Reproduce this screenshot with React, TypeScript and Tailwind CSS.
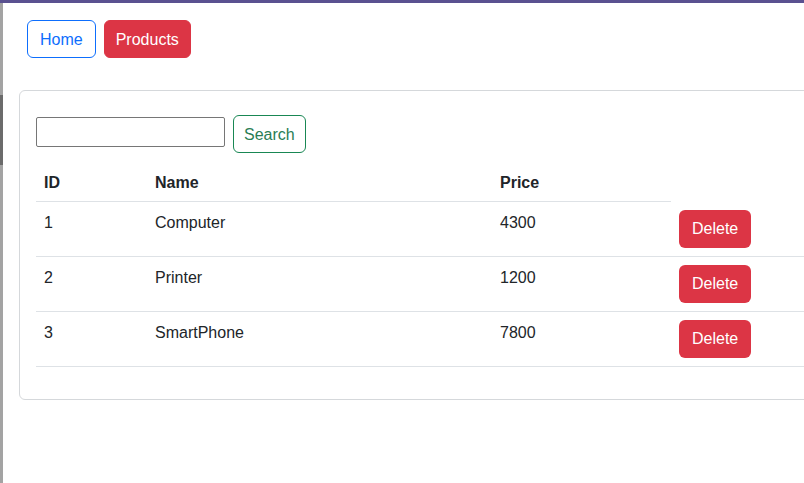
const products = [
  { id: 1, name: 'Computer', price: 4300 },
  { id: 2, name: 'Printer', price: 1200 },
  { id: 3, name: 'SmartPhone', price: 7800 },
]

export default function App() {
  return (
    <div className="flex h-[483px] w-[804px] flex-col overflow-hidden bg-white font-['Segoe_UI','Liberation_Sans',sans-serif] text-base text-[#212529]">
      <div className="h-[3px] shrink-0 bg-[#5a5190]" />
      <div className="flex flex-1">
        <div className="flex w-[3px] shrink-0 flex-col">
          <div className="h-[92px] bg-[#a3a3a3]" />
          <div className="h-[70px] bg-[#6b6b6b]" />
          <div className="flex-1 bg-[#a3a3a3]" />
        </div>
        <main className="flex-1 pl-4 pt-[17px]">
          <nav className="flex gap-2 pl-2">
            <button className="h-[38px] rounded-md border border-[#0d6efd] px-3 pt-[2px] text-[#0d6efd]">Home</button>
            <button className="h-[38px] rounded-md border border-[#dc3545] bg-[#dc3545] px-[11px] pt-[2px] text-white">
              Products
            </button>
          </nav>

          <section className="mt-8 w-[840px] rounded-md border border-[#d5d8db] px-4 pb-4 pt-6">
            <div className="flex items-start gap-2">
              <input className="mt-[2px] h-[30px] w-[189px] rounded-[2px] border border-[#767676] px-1 outline-none" />
              <button className="h-[38px] rounded-md border border-[#198754] px-[10px] pt-[1px] text-[#2a7d55]">Search</button>
            </div>

            <table className="mb-4 mt-[10px] w-full border-collapse text-left">
              <thead>
                <tr>
                  <th className="w-[111px] border-b border-[#dee2e6] px-2 pb-[6px] pt-[8px] font-bold">ID</th>
                  <th className="w-[345px] border-b border-[#dee2e6] px-2 pb-[6px] pt-[8px] font-bold">Name</th>
                  <th className="w-[179px] border-b border-[#dee2e6] px-2 pb-[6px] pt-[8px] font-bold">Price</th>
                </tr>
              </thead>
              <tbody>
                {products.map((p) => (
                  <tr key={p.id} className="border-b border-[#dee2e6]">
                    <td className="px-2 pb-[7px] pt-[9px] align-top">{p.id}</td>
                    <td className="px-2 pb-[7px] pt-[9px] align-top">{p.name}</td>
                    <td className="px-2 pb-[7px] pt-[9px] align-top">{p.price}</td>
                    <td className="px-2 py-2 align-top">
                      <button className="h-[38px] rounded-md bg-[#dc3545] px-[13px] pt-[1px] text-white">Delete</button>
                    </td>
                  </tr>
                ))}
              </tbody>
            </table>
          </section>
        </main>
      </div>
    </div>
  )
}
